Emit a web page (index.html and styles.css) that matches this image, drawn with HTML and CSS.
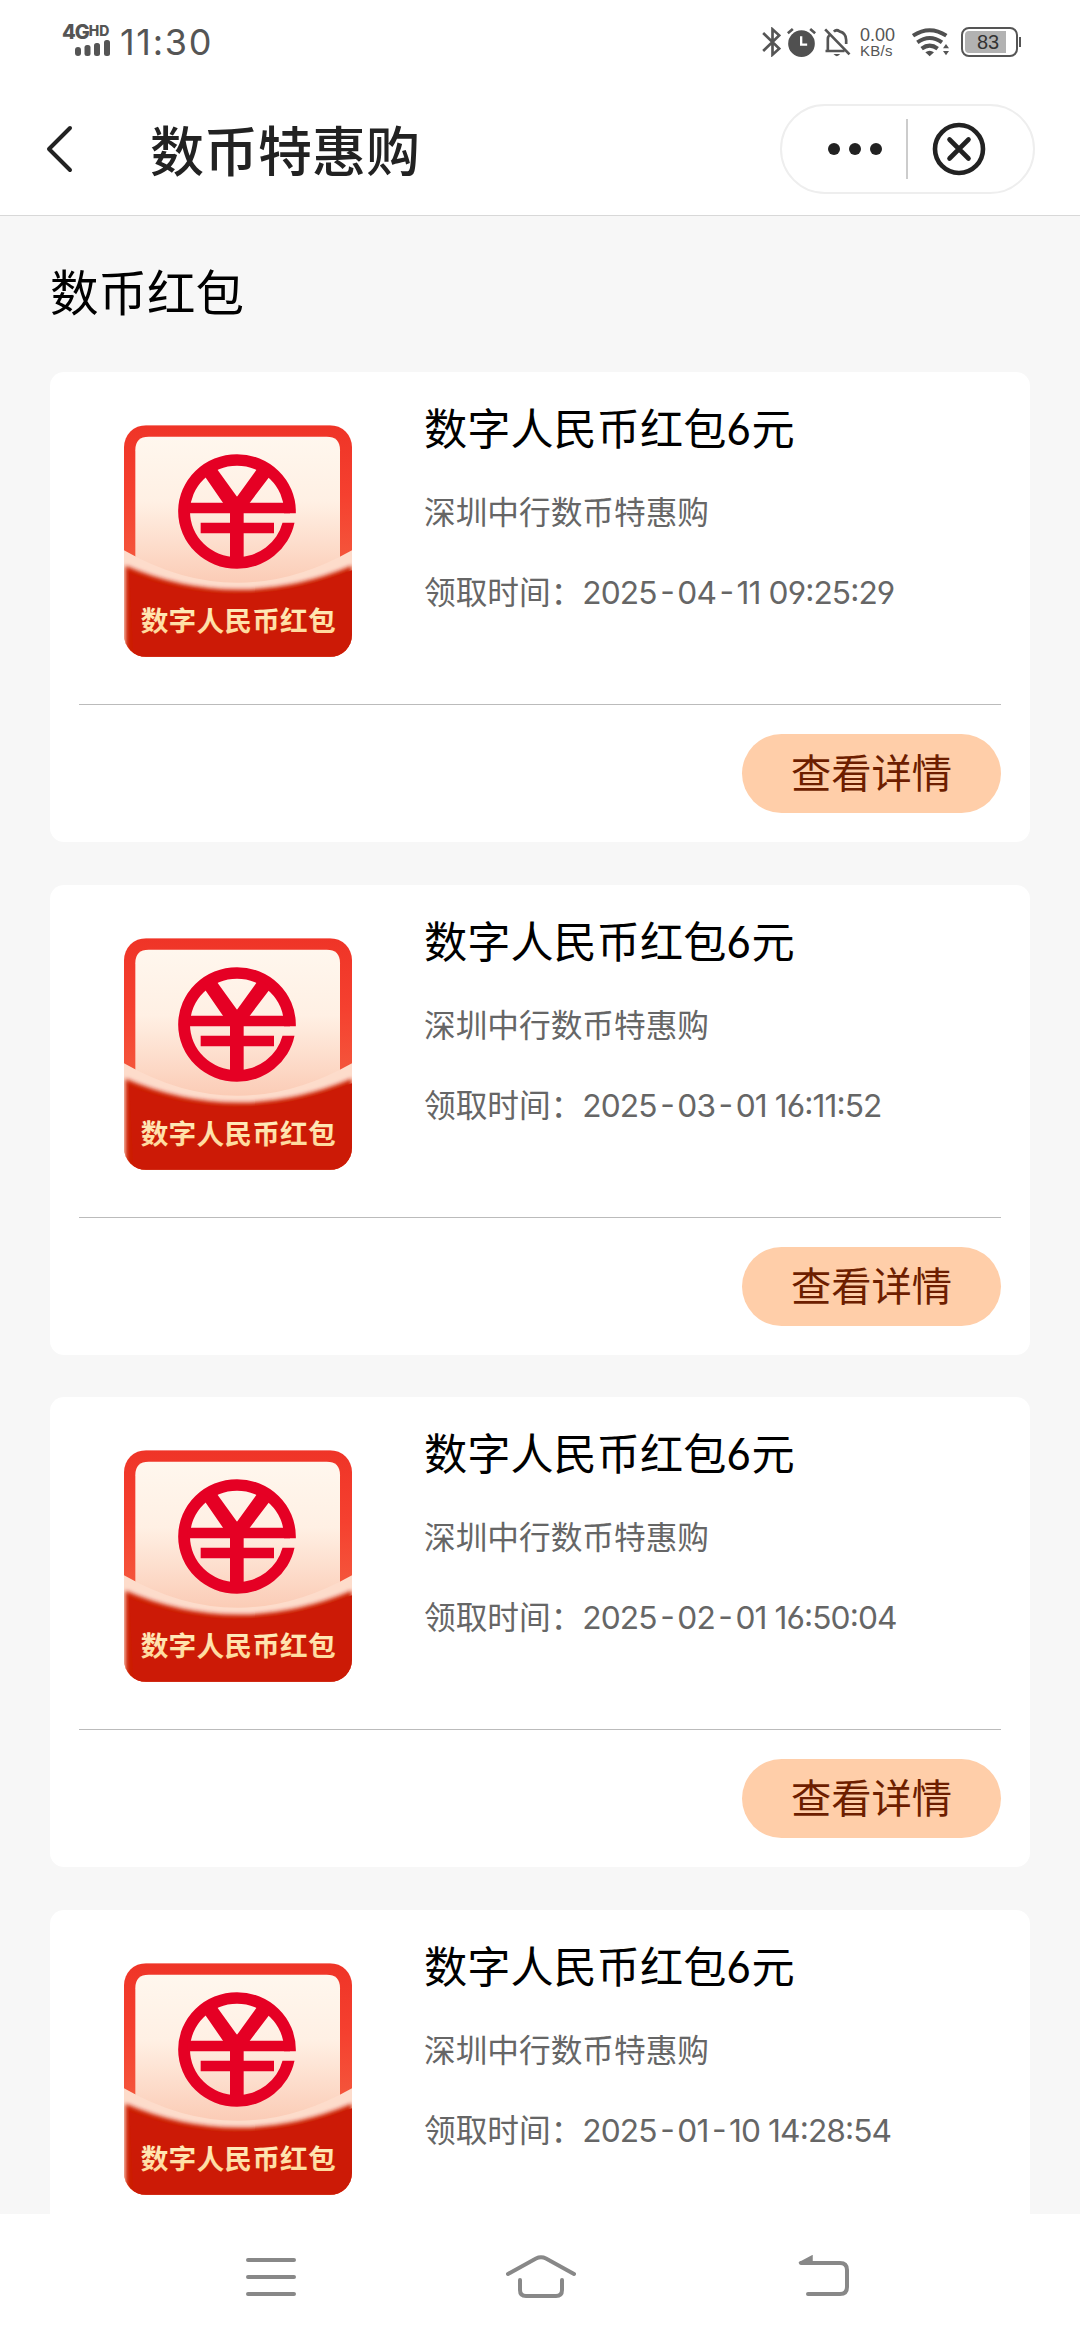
FILE: index.html
```html
<!DOCTYPE html>
<html lang="zh-CN">
<head>
<meta charset="utf-8">
<title>数币特惠购</title>
<link rel="stylesheet" href="styles.css">
</head>
<body>
<svg class="defs" width="0" height="0" aria-hidden="true">
  <defs>
    <linearGradient id="frame" x1="0" y1="0" x2="0" y2="1">
      <stop offset="0" stop-color="#ef3427"/><stop offset=".3" stop-color="#f5402f"/><stop offset=".6" stop-color="#f4573c"/>
    </linearGradient>
    <linearGradient id="paper" x1="0" y1="0" x2="0" y2="1">
      <stop offset="0" stop-color="#fff7ee"/><stop offset=".4" stop-color="#fff0e4"/><stop offset="1" stop-color="#fac4ac"/>
    </linearGradient>
    <linearGradient id="gold" x1="0" y1="0" x2="0" y2="1">
      <stop offset="0" stop-color="#fff0c4"/><stop offset="1" stop-color="#ffd595"/>
    </linearGradient>
    <clipPath id="tile"><rect x="72" y="75" width="684" height="695" rx="66"/></clipPath>
    <filter id="soft" x="-10%" y="-10%" width="120%" height="120%"><feGaussianBlur stdDeviation="7"/></filter>
    <symbol id="packet" viewBox="72 75 684 695">
      <g clip-path="url(#tile)">
        <rect x="72" y="75" width="684" height="695" fill="url(#frame)"/>
        <path d="M106 600V150Q106 110 146 110H680Q720 110 720 150V600Z" fill="url(#paper)"/>
        <path d="M72 450Q411 645 756 450V770H72Z" fill="#fddccb"/>
        <path d="M76 497Q411 641 756 497V790H76Z" fill="#cc1a06" filter="url(#soft)"/>
        <path d="M88 520Q411 648 756 510V770H100Z" fill="#cc1a06"/>
      </g>
      <g fill="#e50024">
        <path d="M587.500 334A176.500 172 0 0 0 411 162A176.500 172 0 0 0 234.500 334A176.500 172 0 0 0 411 506A176.500 172 0 0 0 583.500 368H547.500A141 137 0 0 1 411 471A141 137 0 0 1 270 334A141 137 0 0 1 411 197A141 137 0 0 1 552 334V339H587.500Z"/>
        <path d="M262 308H570V339H262ZM302 368H522V399H302ZM390 290H431V480H390Z"/>
        <path d="M310 222L346 200L411 290L476 200L514 222L446 312H372Z"/>
      </g>
      <text x="122" y="693" class="packet-text" fill="url(#gold)">数字人民币红包</text>
    </symbol>
  </defs>
</svg>

<div class="screen">
  <div class="status">
    <div class="network">
      <div class="net-label">4G<span>HD</span></div>
      <svg width="35" height="16" viewBox="0 0 35 16" fill="#555"><rect y="7" width="6" height="9" rx="3"/><rect x="9.500" y="5" width="6" height="11" rx="2.500"/><rect x="19" y="3" width="6" height="13" rx="2.500"/><rect x="29" width="6" height="16" rx="2.500"/></svg>
    </div>
    <div class="clock">11:30</div>
    <div class="indicators">
      <svg class="bt" viewBox="62 81 56 90" width="19" height="30" fill="none" stroke="#555" stroke-width="8"><path d="M65 99L113 146L93 164V88L113 106L65 153"/></svg>
      <svg class="alarm" viewBox="138 81 86 90" width="29" height="30"><circle cx="181" cy="131" r="40" fill="#505050"/><path d="M140 100L155 87M222 100L207 87" stroke="#555" stroke-width="8"/><path d="M180 109V134H198" fill="none" stroke="#fff" stroke-width="7"/></svg>
      <svg class="bell" viewBox="248 81 80 90" width="27" height="30" fill="none" stroke="#555" stroke-width="8"><path d="M251 88L324 163M252 153H309M259 153V118Q259 110 263 106M277 95Q285 87 294 94Q314 99 314 120V132"/><path d="M276 162H296Q286 175 276 162Z" fill="#555" stroke="none"/></svg>
      <div class="speed"><span>0.00</span><span>KB/s</span></div>
      <svg class="wifi" viewBox="511 81 114 90" width="38" height="30" fill="none" stroke="#505050" stroke-width="12"><path d="M514 107Q564 74 614 107M527 127Q564 101 601 127M540 146Q564 128 588 146"/><path d="M551 157Q564 148 577 157L564 169Z" fill="#505050" stroke="none"/><path d="M604 145L613 132L622 145ZM604 153L613 166L622 153Z" fill="#555" stroke="none"/></svg>
      <div class="battery"><span>83</span></div>
    </div>
  </div>

  <header class="header">
    <svg class="back" width="28" height="50" viewBox="0 0 28 50" fill="none" stroke="#222" stroke-width="4" stroke-linecap="round" stroke-linejoin="round"><path d="M24 4L3 25L24 46"/></svg>
    <h1>数币特惠购</h1>
    <div class="capsule">
      <svg width="54" height="12" viewBox="0 0 54 12" fill="#222"><circle cx="6" cy="6" r="6"/><circle cx="27" cy="6" r="6"/><circle cx="48" cy="6" r="6"/></svg>
      <i></i>
      <svg width="54" height="54" viewBox="0 0 54 54" fill="none" stroke="#222" stroke-width="4.600" stroke-linecap="round"><circle cx="27" cy="27" r="24"/><path d="M17.500 17.500L36.500 36.500M36.500 17.500L17.500 36.500"/></svg>
    </div>
  </header>

  <main class="content">
    <h2>数币红包</h2>
    <article class="card">
      <div class="body">
        <svg class="packet"><use href="#packet"/></svg>
        <div class="info"><h3>数字人民币红包6元</h3><p>深圳中行数币特惠购</p><p class="time">领取时间：<span>2025<b>-</b>04<b>-</b>11 09:25:29</span></p></div>
      </div>
      <div class="actions"><button>查看详情</button></div>
    </article>
    <article class="card">
      <div class="body">
        <svg class="packet"><use href="#packet"/></svg>
        <div class="info"><h3>数字人民币红包6元</h3><p>深圳中行数币特惠购</p><p class="time">领取时间：<span>2025<b>-</b>03<b>-</b>01 16:11:52</span></p></div>
      </div>
      <div class="actions"><button>查看详情</button></div>
    </article>
    <article class="card">
      <div class="body">
        <svg class="packet"><use href="#packet"/></svg>
        <div class="info"><h3>数字人民币红包6元</h3><p>深圳中行数币特惠购</p><p class="time">领取时间：<span>2025<b>-</b>02<b>-</b>01 16:50:04</span></p></div>
      </div>
      <div class="actions"><button>查看详情</button></div>
    </article>
    <article class="card last">
      <div class="body">
        <svg class="packet"><use href="#packet"/></svg>
        <div class="info"><h3>数字人民币红包6元</h3><p>深圳中行数币特惠购</p><p class="time">领取时间：<span>2025<b>-</b>01<b>-</b>10 14:28:54</span></p></div>
      </div>
    </article>
  </main>

  <nav class="nav">
    <svg width="50" height="44" viewBox="246 2255 50 44" fill="none" stroke="#888" stroke-width="4" stroke-linecap="round"><path d="M248 2260H294M248 2277H294M248 2294H294"/></svg>
    <svg class="home" width="70" height="44" viewBox="506 2255 70 44" fill="none" stroke="#888" stroke-width="4" stroke-linecap="round"><path d="M508 2274L536 2258.500Q541 2256 546 2258.500L574 2274M520 2280V2290Q520 2296 526 2296H556Q562 2296 562 2290V2280"/></svg>
    <svg width="51" height="44" viewBox="798 2255 51 44" fill="none" stroke="#888" stroke-width="4" stroke-linecap="round"><path d="M801 2263H840Q847 2263 847 2270V2287Q847 2294 840 2294H808"/><path d="M799 2263L812 2256V2263Z" fill="#888" stroke-width="1.500"/></svg>
  </nav>
</div>
</body>
</html>
```
FILE: styles.css
```css
* { box-sizing: border-box; margin: 0; padding: 0; }
body { font-family: Inter, "Noto Sans CJK SC", sans-serif; background: #fff; font-feature-settings: "cv03", "cv04"; }
svg { display: block; flex: none; }
.defs { position: absolute; }
.screen { width: 1080px; height: 2340px; display: flex; flex-direction: column; overflow: hidden; }

.status { height: 84px; flex: none; display: flex; align-items: flex-start; padding: 24px 62px 0 62px; color: #555; }
.network { width: 48px; display: flex; flex-direction: column; align-items: flex-end; }
.net-label { height: 16px; width: 48px; font-size: 20px; line-height: 17px; font-weight: 800; letter-spacing: -1px; white-space: nowrap; display: flex; align-items: flex-start; }
.net-label span { font-size: 14px; line-height: 13px; letter-spacing: 0; }
.clock { margin-left: 10px; font-size: 36px; line-height: 36px; letter-spacing: 1.700px; }
.indicators { margin-left: auto; display: flex; align-items: flex-start; padding-top: 3px; }
.alarm { margin-left: 6px; }
.bell { margin-left: 8px; }
.speed { width: 40px; margin-left: 9px; display: flex; flex-direction: column; font-family: "Liberation Sans", sans-serif; font-size: 18px; line-height: 16px; }
.speed span:last-child { font-size: 15px; letter-spacing: .3px; }
.wifi { margin-left: 12px; }
.battery { position: relative; margin-left: 11px; width: 57px; height: 30px; border: 2.500px solid #555; border-radius: 8px; padding: 2px; }
.battery span { display: block; width: 41px; height: 100%; background: #b2b2b2; border-radius: 4px 0 0 4px; color: #333; font: 20px/22px "Liberation Sans", sans-serif; padding-left: 12px; }
.battery::after { content: ""; position: absolute; right: -5px; top: 8px; width: 2.500px; height: 10px; background: #555; }

.header { height: 132px; flex: none; display: flex; align-items: center; padding: 0 45px 2px 46px; border-bottom: 1px solid #d8d8d8; }
.header h1 { margin-left: 76px; font-size: 54px; line-height: 80px; font-weight: 500; color: #222; font-family: "Noto Sans CJK SC", sans-serif; }
.capsule { margin-left: auto; width: 255px; height: 90px; border: 2px solid #eee; border-radius: 45px; display: flex; align-items: center; padding-left: 46px; }
.capsule i { width: 2px; height: 60px; background: #ccc; margin: 0 24px 0 24px; }

.content { flex: 1; min-height: 0; overflow: hidden; background: #f7f7f7; padding: 38px 50px 0; }
.content h2 { height: 118px; font: 400 48.500px/72px "Noto Sans CJK SC", sans-serif; color: #000; }
.card { height: 470px; margin-bottom: 42.500px; background: #fff; border-radius: 14px; padding: 0 29px; }
.body { height: 333px; border-bottom: 1px solid #bbb; display: flex; align-items: flex-start; padding-left: 45px; }
.last .body { border-bottom: 0; }
.packet { width: 228px; height: 232px; margin-top: 53px; }
.packet-text { font: 700 83px "Noto Sans CJK SC", sans-serif; letter-spacing: .700px; }
.info { margin-left: 72px; padding-top: 26px; white-space: nowrap; }
.info h3 { font-size: 43.200px; line-height: 62px; font-weight: 400; color: #000; }
.info p { margin-top: 30px; font-size: 31.680px; line-height: 45px; color: #666; }
.info p.time { margin-top: 35px; }
.time span { letter-spacing: -.900px; font-feature-settings: "cv03", "cv04", "case"; }
.time b { font-weight: 400; padding: 0 3.500px; }
.actions { display: flex; justify-content: flex-end; padding-top: 29px; }
.actions button { width: 259px; height: 79px; border: 0; border-radius: 40px; background: #ffcea9; color: #6d1e00; font: 400 40.300px/74px "Noto Sans CJK SC", sans-serif; padding-bottom: 5px; }

.nav { height: 126px; flex: none; background: #fff; display: flex; padding: 41px 0 0 246px; }
.home { margin: 0 222px 0 210px; }
```
